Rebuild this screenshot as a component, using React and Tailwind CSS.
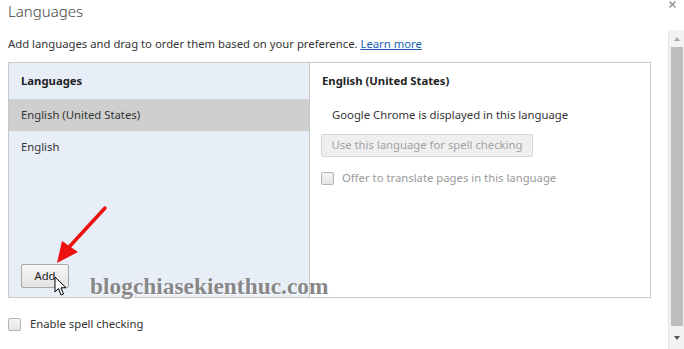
import React from 'react';

const font = { fontFamily: '"Segoe UI", "Noto Sans", "Open Sans", sans-serif' };

const Checkbox = () => (
  <span className="inline-block w-[13px] h-[13px] rounded-[2px] border border-[#b5b5b5] bg-gradient-to-b from-[#f4f4f4] to-[#e6e6e6]" />
);

const Cursor = () => (
  <svg width="14" height="21" viewBox="0 0 14 21" className="absolute left-[54px] top-[276px]">
    <path d="M1 1 L1 16 L4.5 12.5 L7 19 L9.5 18 L7 11.8 L12 11.8 Z" fill="#fff" stroke="#000" strokeWidth="1" strokeLinejoin="round" />
  </svg>
);

const RedArrow = () => (
  <svg width="120" height="80" viewBox="0 0 120 80" className="absolute left-0 top-[200px] pointer-events-none">
    <line x1="105" y1="8" x2="70" y2="46" stroke="#ee1111" strokeWidth="3.5" strokeLinecap="round" />
    <polygon points="57,63 62,41 78,52" fill="#ee1111" />
  </svg>
);

export default function App() {
  return (
    <div className="relative w-[684px] h-[349px] bg-white overflow-hidden text-[#333]" style={font}>
      <div className="flex h-full">
        {/* main dialog content */}
        <div className="flex-1 flex flex-col pl-[8px] pr-[17px]">
          <div className="h-[22px] pt-[1px] text-[15px] leading-[20px] text-[#444] font-light">Languages</div>
          <div className="mt-[13px] text-[11.3px] leading-[18px]">
            Add languages and drag to order them based on your preference.{' '}
            <span className="text-[#1a5fb4] underline">Learn more</span>
          </div>

          <div className="mt-[9px] h-[236px] border border-[#c8c8c8] flex">
            {/* left list */}
            <div className="w-[301px] bg-[#e8eef8] border-r border-[#c8c8c8] flex flex-col">
              <div className="h-[36px] flex items-center px-[12px] text-[11.3px] font-bold text-[#222]">Languages</div>
              <div className="h-[32px] flex items-center px-[12px] bg-[#cfcfcf] text-[11.3px]">English (United States)</div>
              <div className="h-[32px] flex items-center px-[12px] text-[11.3px]">English</div>
              <div className="flex-1" />
              <div className="px-[12px] pb-[9px]">
                <button className="w-[48px] h-[24px] rounded-[2px] border border-[#a8a8a8] bg-gradient-to-b from-[#f6f6f6] to-[#e3e3e3] text-[11.3px] text-[#222]">
                  Add
                </button>
              </div>
            </div>

            {/* right detail */}
            <div className="flex-1 flex flex-col px-[11px]">
              <div className="h-[36px] flex items-center pl-[1px] text-[11.3px] font-bold text-[#222]">English (United States)</div>
              <div className="h-[32px] flex items-center pl-[11px] text-[11.3px]">Google Chrome is displayed in this language</div>
              <div>
                <button className="h-[23px] w-[212px] rounded-[2px] border border-[#d6d6d6] bg-[#efefef] text-[11.3px] text-[#a2a2a2]">
                  Use this language for spell checking
                </button>
              </div>
              <div className="mt-[13px] flex items-center gap-[8px] text-[11.3px] text-[#9a9a9a]">
                <Checkbox />
                <span>Offer to translate pages in this language</span>
              </div>
            </div>
          </div>

          <div className="mt-[18px] flex items-center gap-[9px] text-[11.3px]">
            <Checkbox />
            <span>Enable spell checking</span>
          </div>
        </div>

        {/* close + scrollbar */}
        <div className="w-[16px] flex flex-col">
          <div className="h-[30px] pt-[1px] pl-[1px]">
            <svg width="7" height="7" viewBox="0 0 7 7">
              <path d="M0.5 0.5 L6.5 6.5 M6.5 0.5 L0.5 6.5" stroke="#8a8a8a" strokeWidth="1.3" />
            </svg>
          </div>
          <div className="flex-1 bg-[#f2f2f2] border-l border-[#e4e4e4] flex flex-col items-center">
            <div className="h-[17px] flex items-center justify-center">
              <span className="w-0 h-0 border-l-[3px] border-r-[3px] border-b-[4px] border-l-transparent border-r-transparent border-b-[#a8a8a8]" />
            </div>
            <div className="w-[12px] h-[279px] bg-[#bdbdbd]" />
            <div className="flex-1 flex items-center justify-center">
              <span className="w-0 h-0 border-l-[3px] border-r-[3px] border-t-[4px] border-l-transparent border-r-transparent border-t-[#555]" />
            </div>
          </div>
        </div>
      </div>

      {/* watermark */}
      <div
        className="absolute left-[90px] top-[269px] text-[23.4px] font-bold text-[#888]"
        style={{ fontFamily: '"Liberation Serif", serif', textShadow: '1px 1px 0 #fff' }}
      >
        blogchiasekienthuc.com
      </div>

      <RedArrow />
      <Cursor />
    </div>
  );
}
